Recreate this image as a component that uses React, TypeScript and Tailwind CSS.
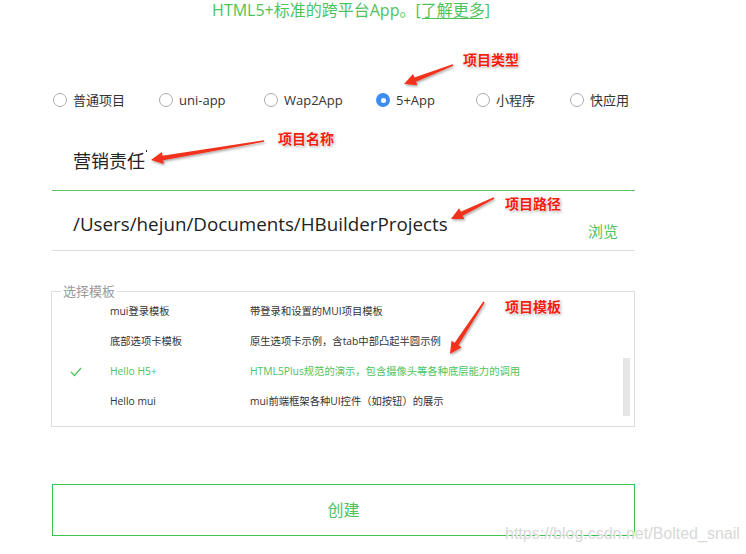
import React from "react";

const fontStack = "font-['Open_Sans','Noto_Sans_CJK_SC',sans-serif]";

const projectTypes = [
  { label: "普通项目", width: "w-[106px]" },
  { label: "uni-app", width: "w-[105px]" },
  { label: "Wap2App", width: "w-[112px]" },
  { label: "5+App", width: "w-[100px]", checked: true },
  { label: "小程序", width: "w-[94px]" },
  { label: "快应用", width: "" },
];

const templates = [
  { name: "mui登录模板", desc: "带登录和设置的MUI项目模板" },
  { name: "底部选项卡模板", desc: "原生选项卡示例，含tab中部凸起半圆示例" },
  { name: "Hello H5+", desc: "HTML5Plus规范的演示，包含摄像头等各种底层能力的调用", active: true },
  { name: "Hello mui", desc: "mui前端框架各种UI控件（如按钮）的展示" },
];

// annotation arrows: tail -> head
const arrows = [
  { x1: 453, y1: 65, x2: 404, y2: 84 },
  { x1: 264, y1: 141, x2: 151, y2: 160 },
  { x1: 494, y1: 198, x2: 451, y2: 219 },
  { x1: 484, y1: 302, x2: 450, y2: 354 },
];

const notes = [
  { text: "项目类型", className: "left-[463px] top-[50px]" },
  { text: "项目名称", className: "left-[278px] top-[129px]" },
  { text: "项目路径", className: "left-[505px] top-[194px]" },
  { text: "项目模板", className: "left-[505px] top-[297px]" },
];

function arrowPoints({ x1, y1, x2, y2 }: { x1: number; y1: number; x2: number; y2: number }) {
  const len = Math.hypot(x2 - x1, y2 - y1);
  const dx = (x2 - x1) / len;
  const dy = (y2 - y1) / len;
  const nx = -dy;
  const ny = dx;
  const head = 12;
  const bx = x2 - dx * head;
  const by = y2 - dy * head;
  const pts: [number, number][] = [
    [x1 + nx * 0.8, y1 + ny * 0.8],
    [bx + nx * 2.2, by + ny * 2.2],
    [bx + nx * 6, by + ny * 6],
    [x2, y2],
    [bx - nx * 6, by - ny * 6],
    [bx - nx * 2.2, by - ny * 2.2],
    [x1 - nx * 0.8, y1 - ny * 0.8],
  ];
  return pts.map((p) => p.map((v) => v.toFixed(1)).join(",")).join(" ");
}

function Radio({ label, checked }: { label: string; checked?: boolean }) {
  return (
    <div className="flex items-center">
      {checked ? (
        <span className="flex justify-center items-center w-[14px] h-[14px] rounded-full bg-[#3c8ef3]">
          <span className="w-[5px] h-[5px] rounded-full bg-white" />
        </span>
      ) : (
        <span className="w-[14px] h-[14px] rounded-full border border-[#ababab] bg-white" />
      )}
      <span className="ml-[6px] text-[13px] leading-[18px] text-[#333]">{label}</span>
    </div>
  );
}

export default function App() {
  return (
    <div className={`relative w-[746px] h-[554px] overflow-hidden bg-white ${fontStack}`}>
      <div className="pr-[44px] text-center text-[16px] leading-[20px] text-[#4cc35c]">
        HTML5+标准的跨平台App。<span className="underline underline-offset-2">[了解更多]</span>
      </div>

      <div className="ml-[52px] w-[583px]">
        <div className="flex items-center mt-[70px] pl-px h-[20px]">
          {projectTypes.map((t) => (
            <div key={t.label} className={t.width}>
              <Radio label={t.label} checked={t.checked} />
            </div>
          ))}
        </div>

        <div className="mt-[30px] h-[51px] pt-[10px] pl-[21px] border-b border-[#5cc067]">
          <span className="text-[18px] leading-[20px] text-[#222]">营销责任</span>
          <span className="inline-block ml-[1px] w-px h-[2px] align-top bg-[#333]" />
        </div>

        <div className="flex justify-between items-start h-[60px] pt-[21px] pl-[21px] pr-[17px] border-b border-[#dedede]">
          <span className="text-[18.8px] leading-[24px] text-[#222]">/Users/hejun/Documents/HBuilderProjects</span>
          <span className="mt-[9px] text-[15px] leading-[20px] text-[#4cc35c]">浏览</span>
        </div>

        <fieldset className="mt-[34px] -ml-px border border-[#dedede] pb-[9px]">
          <legend className="ml-[9px] px-[2px] text-[13px] leading-[12px] text-[#999]">选择模板</legend>
          <div className="flex">
            <div className="flex-1">
              {templates.map((t) => (
                <div
                  key={t.name}
                  className={`flex items-center h-[30px] text-[10.3px] ${t.active ? "text-[#4cc35c]" : "text-[#333]"}`}
                >
                  <div className="flex items-center w-[58px] pl-[18px]">
                    {t.active && (
                      <svg width="12" height="10" viewBox="0 0 12 10">
                        <polyline points="1,5 4.5,8.5 11,1" fill="none" stroke="#4cc35c" strokeWidth="1.2" />
                      </svg>
                    )}
                  </div>
                  <div className="w-[140px]">{t.name}</div>
                  <div className="flex-1">{t.desc}</div>
                </div>
              ))}
            </div>
            <div className="mr-[4px] w-[7px]">
              <div className="mt-[61px] h-[58px] bg-[#e6e6e6]" />
            </div>
          </div>
        </fieldset>

        <button
          type="button"
          className="mt-[57px] w-full h-[52px] border border-[#3cc152] text-[16px] text-[#4cc35c] bg-white"
        >
          创建
        </button>
      </div>

      <svg className="absolute inset-0 pointer-events-none" width="746" height="554">
        <defs>
          <filter id="shadow" x="-20%" y="-20%" width="140%" height="140%">
            <feDropShadow dx="1" dy="1.5" stdDeviation="1" floodColor="#000" floodOpacity="0.35" />
          </filter>
        </defs>
        {arrows.map((a, i) => (
          <polygon key={i} points={arrowPoints(a)} fill="#f2301a" filter="url(#shadow)" />
        ))}
      </svg>

      {notes.map((n) => (
        <div
          key={n.text}
          className={`absolute ${n.className} text-[14px] leading-[18px] font-bold text-[#f41c0c] [text-shadow:0_0_2px_#fff,0_0_2px_#fff,1px_1px_3px_rgba(0,0,0,0.45)] font-['Noto_Sans_CJK_SC',sans-serif]`}
        >
          {n.text}
        </div>
      ))}

      <div className="absolute left-[505px] top-[524px] text-[16px] leading-[20px] text-[#d8d8d8] [text-shadow:1px_1px_0_#fff] font-['Liberation_Sans',sans-serif] whitespace-nowrap">
        https://blog.csdn.net/Bolted_snail
      </div>
    </div>
  );
}
